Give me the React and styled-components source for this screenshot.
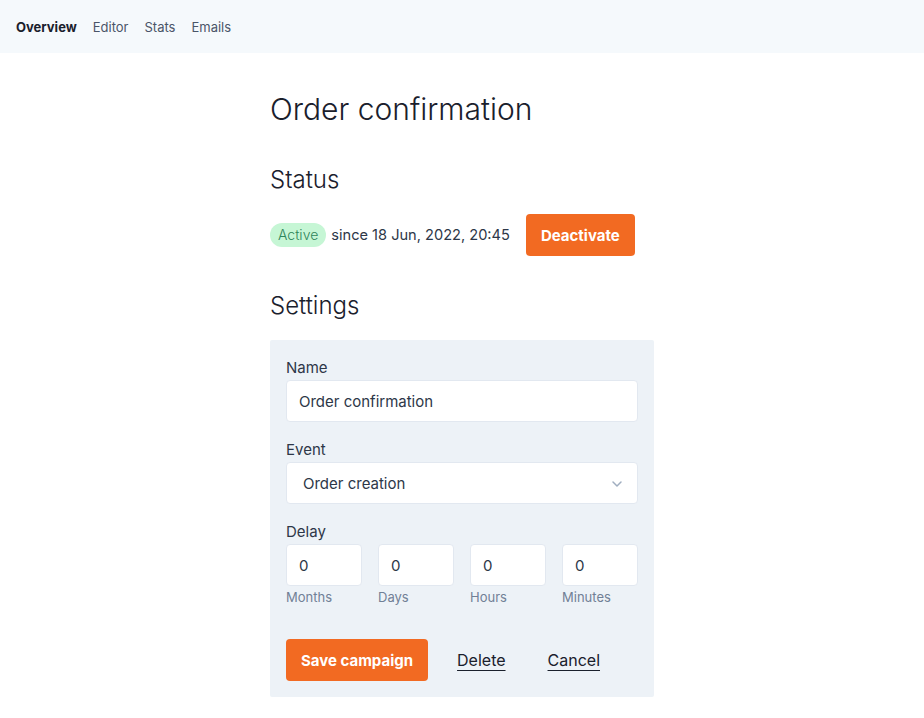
import React from 'react';
import styled, { createGlobalStyle } from 'styled-components';

const GlobalStyle = createGlobalStyle`
    body {
        margin: 0;
        font-family: 'Inter', 'Lato', sans-serif;
        color: #1a202c;
        background: #ffffff;
    }
    * { box-sizing: border-box; }
`;

const NavBar = styled.nav`
    display: flex;
    align-items: center;
    gap: 16px;
    height: 53px;
    padding: 0 16px;
    background: #f5f9fc;
`;

const NavItem = styled.a`
    font-size: 13px;
    color: ${p => (p.$active ? '#1a202c' : '#4a5568')};
    font-weight: ${p => (p.$active ? 700 : 400)};
    text-decoration: none;
    cursor: pointer;
`;

const Main = styled.main`
    width: 384px;
    margin: 0 auto;
    padding-top: 38px;
`;

const Title = styled.h1`
    margin: 0 0 39px;
    font-size: 30px;
    font-weight: 300;
    line-height: 36px;
    color: #1a202c;
`;

const SectionTitle = styled.h2`
    margin: 0 0 20px;
    font-size: 24px;
    font-weight: 300;
    line-height: 28px;
    color: #1a202c;
`;

const StatusRow = styled.div`
    display: flex;
    align-items: center;
    margin-bottom: 36px;
    font-size: 14.6px;
    color: #2d3748;
`;

const Pill = styled.span`
    display: inline-block;
    padding: 3px 8px;
    margin-right: 5px;
    border-radius: 12px;
    background: #c6f6d5;
    color: #2f855a;
    font-size: 14px;
    font-weight: 300;
    line-height: 18px;
`;

const Button = styled.button`
    height: 42px;
    padding: 0 15px;
    border: none;
    border-radius: 4px;
    background: #f26a22;
    color: #fff;
    font-family: inherit;
    font-size: 15px;
    font-weight: 700;
    cursor: pointer;
    margin-left: ${p => p.$offset || 0}px;
`;

const Panel = styled.form`
    display: flex;
    flex-direction: column;
    padding: 16px;
    background: #edf2f7;
    border-radius: 2px;
`;

const Field = styled.div`
    display: flex;
    flex-direction: column;
    margin-bottom: ${p => (p.$last ? 0 : 16)}px;
`;

const Label = styled.label`
    font-size: 15px;
    color: #2d3748;
    line-height: 24px;
`;

const TextInput = styled.input`
    height: 42px;
    width: 100%;
    padding: 0 12px;
    border: 1px solid #e2e8f0;
    border-radius: 4px;
    background: #fff;
    font-family: inherit;
    font-size: 15px;
    color: #2d3748;
    outline: none;
`;

const SelectBox = styled.div`
    position: relative;
    display: flex;
    align-items: center;
    height: 42px;
    padding: 0 16px;
    border: 1px solid #e2e8f0;
    border-radius: 4px;
    background: #fff;
    font-size: 15px;
    color: #2d3748;
`;

const Chevron = styled.svg`
    position: absolute;
    right: 14px;
    top: 15px;
`;

const DelayGrid = styled.div`
    display: grid;
    grid-template-columns: repeat(4, 1fr);
    gap: 16px;
`;

const DelayCell = styled.div`
    display: flex;
    flex-direction: column;
`;

const SubLabel = styled.span`
    font-size: 13px;
    line-height: 22px;
    color: #718096;
`;

const Actions = styled.div`
    display: flex;
    align-items: center;
    margin-top: 31px;
`;

const LinkButton = styled.a`
    margin-left: ${p => p.$offset}px;
    font-size: 16px;
    color: #1a202c;
    text-decoration: underline;
    text-underline-offset: 4px;
    cursor: pointer;
`;

const units = ['Months', 'Days', 'Hours', 'Minutes'];

const App = () => {
    return (
        <>
            <GlobalStyle />
            <NavBar>
                <NavItem $active>Overview</NavItem>
                <NavItem>Editor</NavItem>
                <NavItem>Stats</NavItem>
                <NavItem>Emails</NavItem>
            </NavBar>
            <Main>
                <Title>Order confirmation</Title>
                <SectionTitle>Status</SectionTitle>
                <StatusRow>
                    <Pill>Active</Pill>
                    since 18 Jun, 2022, 20:45
                    <Button type="button" $offset={16}>Deactivate</Button>
                </StatusRow>
                <SectionTitle>Settings</SectionTitle>
                <Panel onSubmit={e => e.preventDefault()}>
                    <Field>
                        <Label>Name</Label>
                        <TextInput defaultValue="Order confirmation" />
                    </Field>
                    <Field>
                        <Label>Event</Label>
                        <SelectBox>
                            Order creation
                            <Chevron width="12" height="12" viewBox="0 0 12 12" fill="none">
                                <path d="M2 4l4 4 4-4" stroke="#a0aec0" strokeWidth="1.5" strokeLinecap="round" strokeLinejoin="round" />
                            </Chevron>
                        </SelectBox>
                    </Field>
                    <Field $last>
                        <Label>Delay</Label>
                        <DelayGrid>
                            {units.map(u => (
                                <DelayCell key={u}>
                                    <TextInput defaultValue="0" />
                                    <SubLabel>{u}</SubLabel>
                                </DelayCell>
                            ))}
                        </DelayGrid>
                    </Field>
                    <Actions>
                        <Button type="submit">Save campaign</Button>
                        <LinkButton $offset={29}>Delete</LinkButton>
                        <LinkButton $offset={42}>Cancel</LinkButton>
                    </Actions>
                </Panel>
            </Main>
        </>
    );
};

export default App;
